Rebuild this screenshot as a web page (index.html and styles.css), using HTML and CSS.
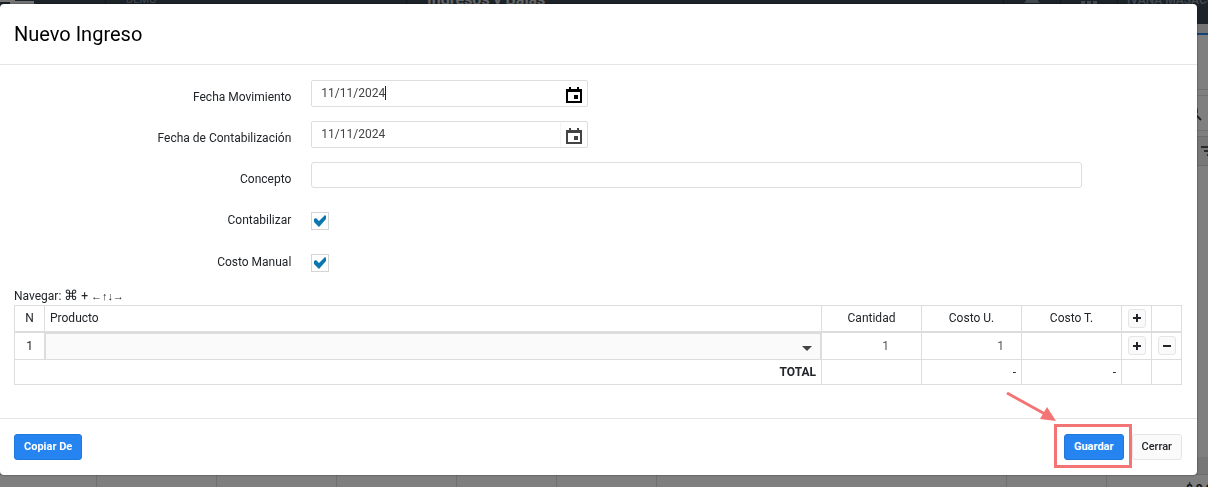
FILE: index.html
```html
<!DOCTYPE html>
<html lang="es">
<head>
    <meta charset="UTF-8">
    <meta name="viewport" content="width=device-width, initial-scale=1.0">
    <title>Ingresos y Bajas</title>
    <link rel="stylesheet" href="styles.css">
</head>
<body>
    <div class="page">
        <header class="topbar">
            <div class="brand"><svg width="35" height="24" viewBox="0 0 35 24"><path d="M0 11h15v2h19v3H10v-2H0z" fill="#e8e8e8"/></svg></div>
            <div class="company">DEMO</div>
            <div class="section">Ingresos y Bajas</div>
            <div class="tool"><svg width="16" height="18" viewBox="0 0 16 18"><path d="M8 0a6 6 0 0 1 6 6v4l2 2H0l2-2V6a6 6 0 0 1 6-6z" fill="#8795a3"/></svg></div>
            <div class="tool"><svg width="16" height="16" viewBox="0 0 16 16"><path d="M0 0h4v3H0zM6 0h4v3H6zM12 0h4v3h-4zM0 5h4v3H0zM6 5h4v3H6zM12 5h4v3h-4zM0 9h4v3H0zM6 9h4v3H6zM12 9h4v3h-4z" fill="#8795a3"/></svg></div>
            <div class="user">IVANA MASACCIO</div>
        </header>
        <div class="accent"></div>
        <div class="summary"></div>
        <div class="search">
            <svg width="16" height="16" viewBox="0 0 16 16"><circle cx="6" cy="6" r="5" fill="#9cc4e8" stroke="#555" stroke-width="2"/><path d="M10 10l5 5" stroke="#444" stroke-width="2"/></svg>
        </div>
        <div class="filters">
            <svg width="16" height="10" viewBox="0 0 16 10"><path d="M0 0h16v2H0zM3 4h10v2H3zM6 8h4v2H6z" fill="#555"/></svg>
        </div>
        <div class="list"></div>
        <div class="list-footer"></div>
        <div class="total-row">
            <span></span><span></span><span></span><span></span><span></span><span></span><span></span><span></span><span class="amount">$ 0,00</span>
        </div>
    </div>

    <div class="overlay">
        <form class="modal">
            <div class="modal-header">
                <h1>Nuevo Ingreso</h1>
            </div>

            <div class="modal-body">
                <div class="field">
                    <label for="fechaMovimiento">Fecha Movimiento</label>
                    <div class="date active">
                        <input type="text" id="fechaMovimiento" value="11/11/2024">
                        <button type="button" aria-label="Abrir calendario">
                            <svg width="16" height="16" viewBox="0 0 16 16" shape-rendering="crispEdges"><path fill-rule="evenodd" d="M3 0h2v2h6V0h2v2h3v14H0V2h3zM2 5v9h12V5zM8 8h4v4H8z" fill="currentColor"/></svg>
                        </button>
                    </div>
                </div>
                <div class="field">
                    <label for="fechaContabilizacion">Fecha de Contabilización</label>
                    <div class="date">
                        <input type="text" id="fechaContabilizacion" value="11/11/2024">
                        <button type="button" aria-label="Abrir calendario">
                            <svg width="16" height="16" viewBox="0 0 16 16" shape-rendering="crispEdges"><path fill-rule="evenodd" d="M3 0h2v2h6V0h2v2h3v14H0V2h3zM2 5v9h12V5zM8 8h4v4H8z" fill="currentColor"/></svg>
                        </button>
                    </div>
                </div>
                <div class="field">
                    <label for="concepto">Concepto</label>
                    <input class="text" type="text" id="concepto">
                </div>
                <div class="field field-check">
                    <label for="contabilizar">Contabilizar</label>
                    <span class="check">
                        <input type="checkbox" id="contabilizar" checked>
                        <svg width="14" height="14" viewBox="0 0 14 14"><path d="M1 5l2-1 3 3 6-6 1 1v3l-7 8-5-5z" fill="#0b76b0"/></svg>
                    </span>
                </div>
                <div class="field field-check">
                    <label for="costoManual">Costo Manual</label>
                    <span class="check">
                        <input type="checkbox" id="costoManual" checked>
                        <svg width="14" height="14" viewBox="0 0 14 14"><path d="M1 5l2-1 3 3 6-6 1 1v3l-7 8-5-5z" fill="#0b76b0"/></svg>
                    </span>
                </div>

                <p class="hint">Navegar: <span class="key">⌘</span> + <span class="arrows">←↑↓→</span></p>
                <table>
                    <colgroup>
                        <col class="col-small"><col><col class="col-number"><col class="col-number"><col class="col-number"><col class="col-small"><col class="col-small">
                    </colgroup>
                    <thead>
                        <tr>
                            <th>N</th>
                            <th class="left">Producto</th>
                            <th>Cantidad</th>
                            <th>Costo U.</th>
                            <th>Costo T.</th>
                            <th><button type="button" class="mini" aria-label="Agregar"><svg width="8" height="8" viewBox="0 0 8 8"><path d="M0 4h8M4 0v8" stroke="#212529" stroke-width="2"/></svg></button></th>
                            <th></th>
                        </tr>
                    </thead>
                    <tbody>
                        <tr>
                            <td class="center">1</td>
                            <td class="product"><select aria-label="Producto"><option></option></select></td>
                            <td><input type="text" value="1" aria-label="Cantidad"></td>
                            <td><input type="text" class="cost" value="1" aria-label="Costo U."></td>
                            <td><input type="text" class="cost" aria-label="Costo T."></td>
                            <td class="center"><button type="button" class="mini" aria-label="Agregar"><svg width="8" height="8" viewBox="0 0 8 8"><path d="M0 4h8M4 0v8" stroke="#212529" stroke-width="2"/></svg></button></td>
                            <td class="center"><button type="button" class="mini" aria-label="Quitar"><svg width="8" height="8" viewBox="0 0 8 8"><path d="M0 4h8" stroke="#212529" stroke-width="2"/></svg></button></td>
                        </tr>
                    </tbody>
                    <tfoot>
                        <tr>
                            <td colspan="2"><b>TOTAL</b></td>
                            <td></td>
                            <td>-</td>
                            <td>-</td>
                            <td></td>
                            <td></td>
                        </tr>
                    </tfoot>
                </table>
            </div>

            <div class="modal-footer">
                <button type="button" class="btn primary">Copiar De</button>
                <div class="actions">
                    <div class="highlight">
                        <svg class="arrow" width="52" height="32" viewBox="0 0 52 32"><path d="M1 2l38 21" stroke="#f27474" stroke-width="3"/><path d="M50 30l-16-2 7-12z" fill="#f27474"/></svg>
                        <button type="submit" class="btn primary">Guardar</button>
                    </div>
                    <button type="button" class="btn">Cerrar</button>
                </div>
            </div>
        </form>
    </div>
</body>
</html>
```
FILE: styles.css
```css
* {
    box-sizing: border-box;
}
body {
    margin: 0;
    height: 100vh;
    overflow: hidden;
    font-family: Roboto, "Liberation Sans", sans-serif;
    font-size: 12px;
    color: #212529;
    background: #fff;
}
input, button, select {
    font: inherit;
    color: inherit;
}

/* page behind the dialog */
.page {
    height: 100vh;
    overflow: hidden;
    display: flex;
    flex-direction: column;
}
.topbar {
    display: flex;
    flex: none;
    height: 48px;
    margin-top: -24px;
    background: #384652;
    color: #8795a3;
    line-height: 48px;
    white-space: nowrap;
}
.topbar > div + div {
    border-left: 1px solid #25303a;
}
.brand {
    width: 105px;
}
.brand svg {
    margin-top: 12px;
}
.company {
    width: 301px;
    padding-left: 20px;
    font-size: 11px;
}
.section {
    flex: 1;
    padding-left: 20px;
    font-size: 16px;
    font-weight: bold;
    color: #ccc;
}
.tool {
    width: 57px;
    display: flex;
    align-items: center;
    justify-content: center;
}
.user {
    width: 91px;
    padding-left: 9px;
    overflow: hidden;
    font-weight: 500;
}
.accent {
    flex: none;
    height: 11px;
    background: #e8e8e8;
    border-bottom: 2px solid #2684ee;
}
.summary {
    flex: none;
    height: 55px;
    border-bottom: 1px solid #e0e0e0;
}
.search, .filters {
    flex: none;
    display: flex;
    justify-content: flex-end;
    align-items: center;
}
.search {
    height: 36px;
    margin: 5px 0;
    padding-right: 6px;
    border-top: 1px solid #e0e0e0;
    border-bottom: 1px solid #e0e0e0;
}
.filters {
    height: 30px;
    margin-right: -9px;
    border-top: 1px solid #d8d8d8;
    border-bottom: 1px solid #d8d8d8;
    background: #eee;
}
.list {
    flex: 1;
}
.list-footer {
    flex: none;
    height: 18px;
    background: #eee;
    border-bottom: 1px solid #d8d8d8;
}
.total-row {
    display: grid;
    grid-template-columns: 97px 120px 120px 120px 100px 100px 350px 100px 1fr;
    height: 12px;
    flex: none;
}
.total-row span {
    border-right: 1px solid #e0e0e0;
}
.total-row .amount {
    padding: 7px 0 0 79px;
    font-weight: bold;
    white-space: nowrap;
    border: 0;
}

/* dialog */
.overlay {
    position: fixed;
    inset: 0;
    padding: 4px 11px 12px 0;
    background: rgba(0, 0, 0, 0.5);
}
.modal {
    background: #fff;
    border-radius: 4px;
    box-shadow: 0 0 2px rgba(0, 0, 0, 0.6);
}
.modal-header {
    padding: 18px 14px;
    border-bottom: 1px solid #e5e5e5;
}
h1 {
    margin: 0;
    font-size: 20px;
    font-weight: normal;
    line-height: 24px;
    color: #000;
}
.modal-body {
    padding: 15px 15px 33px 14px;
}
.field {
    display: flex;
    align-items: flex-start;
    height: 41px;
}
.field-check {
    height: 42px;
}
.field label {
    width: 24%;
    padding: 10px 3px 0 0;
    margin-right: 17px;
    text-align: right;
    line-height: 14px;
}
.date {
    display: flex;
    width: 277px;
    height: 27px;
    border: 1px solid #ddd;
    border-radius: 2px;
    color: #444;
}
.date input {
    flex: 1;
    min-width: 0;
    padding: 0 9px 2px;
    border: 0;
    outline: 0;
    background: none;
}
.date button {
    display: flex;
    width: 27px;
    padding: 6px 0 0 5px;
    border: 0;
    border-left: 1px solid #f5f5f5;
    background: none;
}
.date.active input {
    background: linear-gradient(#222, #222) no-repeat 73px 5px / 1px 14px;
}
.date.active button {
    border-color: #fff;
    color: #000;
}
.text {
    width: 66%;
    height: 26px;
    border: 1px solid #ddd;
    border-radius: 3px;
}
.check {
    display: grid;
    margin-top: 9px;
}
.check input, .check svg {
    grid-area: 1 / 1;
    place-self: center;
}
.check svg {
    pointer-events: none;
}
.check input {
    appearance: none;
    width: 18px;
    height: 18px;
    margin: 0;
    border: 1px solid #d5d5d5;
}
.check input:not(:checked) + svg {
    display: none;
}
.hint {
    height: 14px;
    margin: 2px 0;
    line-height: 14px;
}
.key {
    font-size: 14px;
    line-height: 12px;
}
.arrows {
    font-size: 11px;
    line-height: 12px;
}

table {
    width: 100%;
    table-layout: fixed;
    border-collapse: collapse;
}
.col-small {
    width: 30px;
}
.col-number {
    width: 100px;
}
th, td {
    height: 26px;
    padding: 0 5px;
    border: 1px solid #ddd;
    line-height: 14px;
    text-align: right;
}
th {
    font-weight: normal;
    text-align: center;
    border-bottom-width: 2px;
}
th.left {
    text-align: left;
}
tfoot td {
    height: 25px;
}
td.center {
    text-align: center;
}
th:nth-child(n+6), td.center, td.product {
    padding: 0;
}
td input {
    width: 100%;
    padding: 0 27px 0 0;
    border: 0;
    text-align: right;
    color: #555;
    background: none;
}
td input.cost {
    padding-right: 12px;
}
td select {
    display: block;
    width: 100%;
    height: 26px;
    border: 1px solid #ddd;
    border-width: 1px 1px 0;
    appearance: none;
    background: #fafafa;
}
.product {
    position: relative;
}
.product::after {
    content: "";
    position: absolute;
    right: 9px;
    top: 13px;
    border: 5px solid transparent;
    border-top-color: #444;
    border-bottom: 0;
    pointer-events: none;
}
.mini {
    display: inline-flex;
    align-items: center;
    justify-content: center;
    width: 18px;
    height: 19px;
    padding: 0;
    vertical-align: middle;
    border: 1px solid #e5e5e5;
    border-radius: 3px;
    background: #fafafa;
}

.modal-footer {
    display: flex;
    justify-content: space-between;
    padding: 15px 15px 15px 14px;
    border-top: 1px solid #e5e5e5;
}
.actions {
    display: flex;
    gap: 8px;
}
.btn {
    height: 26px;
    padding: 0 9px;
    border: 1px solid #e5e5e5;
    border-radius: 3px;
    font-size: 11px;
    font-weight: 500;
    background: #fafafa;
}
.btn.primary {
    border-color: #1e78dd;
    background: #2684f0;
    color: #fff;
    font-weight: bold;
}
.highlight {
    position: relative;
}
.highlight::before {
    content: "";
    position: absolute;
    inset: -10px -8px -8px -10px;
    border: 3px solid #f27474;
    pointer-events: none;
}
.arrow {
    position: absolute;
    right: 66px;
    bottom: 37px;
}
```
